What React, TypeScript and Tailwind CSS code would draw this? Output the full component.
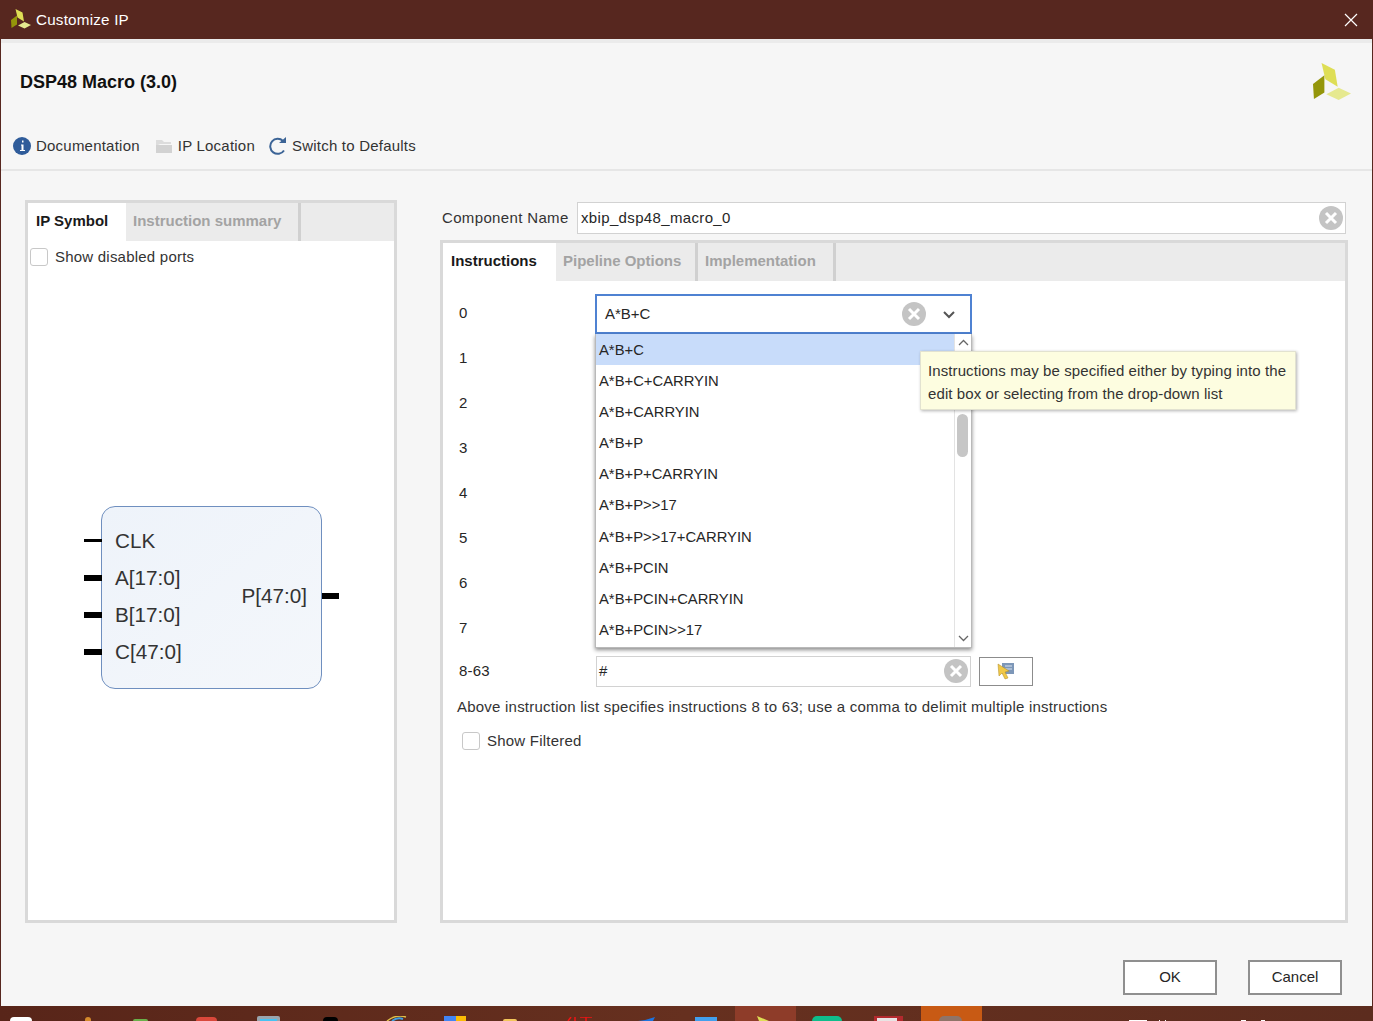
const options = [
  "A*B+C",
  "A*B+C+CARRYIN",
  "A*B+CARRYIN",
  "A*B+P",
  "A*B+P+CARRYIN",
  "A*B+P>>17",
  "A*B+P>>17+CARRYIN",
  "A*B+PCIN",
  "A*B+PCIN+CARRYIN",
  "A*B+PCIN>>17",
];

const ClearIcon = ({ size = 24 }: { size?: number }) => (
  <svg width={size} height={size} viewBox="0 0 24 24" className="shrink-0">
    <circle cx="12" cy="12" r="12" fill="#c4c4c4" />
    <path d="M7 7l10 10M17 7L7 17" stroke="#fff" strokeWidth="3" />
  </svg>
);

const Logo = ({ size }: { size: number }) => (
  <svg width={size} height={size} viewBox="0 0 40 40">
    <path d="M9 0l14 7 3 18L13 17z" fill="#dede55" />
    <path d="M0 22l12-9v18L1 38z" fill="#94960a" />
    <path d="M14 33l13-7 13 6-13 7z" fill="#e6e98f" />
  </svg>
);

const Checkbox = () => (
  <span className="w-[18px] h-[18px] bg-white border border-[#c8c8c8] rounded-[3px] shrink-0" />
);

const Port = ({ label, thick }: { label: string; thick?: boolean }) => (
  <div className="flex items-center h-[37px]">
    <span className={`w-[18px] bg-black -ml-[18px] ${thick ? "h-[6px]" : "h-[3px]"}`} />
    <span className="ml-[13px]">{label}</span>
  </div>
);

const Tab = ({ label, active, w }: { label: string; active?: boolean; w: string }) => (
  <div
    className={`h-full flex items-center font-bold text-[15px] tracking-normal pb-[2px] ${w} ${
      active ? "bg-white text-[#1a1a1a] pl-[8px]" : "pl-[7px] text-[#a3a3a3]"
    }`}
  >
    {label}
  </div>
);

export default function App() {
  return (
    <div className="w-[1373px] h-[1021px] flex flex-col bg-[#f6f6f6] text-[#262626] text-[15px] tracking-[0.22px] font-['Liberation_Sans',Arial,sans-serif] overflow-hidden">
      {/* Title bar */}
      <div className="h-[39px] bg-[#57271f] flex items-center justify-between pl-[11px] pr-[15px] text-white text-[15.2px] shrink-0">
        <div className="flex items-center gap-[5px]">
          <Logo size={20} />
          <span className="mt-[1px]">Customize IP</span>
        </div>
        <svg width="14" height="14" viewBox="0 0 14 14">
          <path d="M1 1l12 12M13 1L1 13" stroke="#fff" strokeWidth="1.2" />
        </svg>
      </div>

      <div className="flex-1 flex flex-col border-x border-[#57271f] min-h-0">
        {/* Header */}
        <div className="h-[132px] border-t-[4px] border-b-[2px] border-t-[#ebebeb] border-b-[#e6e6e6] pl-[12px] pr-[21px] flex flex-col shrink-0">
          <div className="flex justify-between items-start h-[58px]">
            <h1 className="font-bold text-[18px] tracking-normal text-[#111] ml-[7px] mt-[26px]">DSP48 Macro (3.0)</h1>
            <div className="mt-[20px]">
              <Logo size={38} />
            </div>
          </div>
          <div className="flex items-center mt-[34px] text-[#333]">
            <svg width="18" height="18" viewBox="0 0 18 18">
              <circle cx="9" cy="9" r="9" fill="#2f5c9a" />
              <path d="M9 3.500h1.500v2H9zM8 7.500h2.500V13H12v1H7v-1h1.500v-4.500H8z" fill="#fff" />
            </svg>
            <span className="ml-[5px]">Documentation</span>
            <svg width="18" height="16" viewBox="0 0 18 16" className="ml-[15px]">
              <path d="M1 2h6l2 2h7v2H5L1 8z" fill="#dcdcdc" />
              <path d="M1 7h16v8H1z" fill="#d2d2d2" />
            </svg>
            <span className="ml-[5px]">IP Location</span>
            <svg width="19" height="18" viewBox="0 0 19 18" className="ml-[14px]">
              <path d="M15 13.500A7.500 7.500 0 1 1 14 4" fill="none" stroke="#3c6496" strokeWidth="2" />
              <path d="M10 6h7V0z" fill="#3c6496" />
            </svg>
            <span className="ml-[4px]">Switch to Defaults</span>
          </div>
        </div>

        {/* Main */}
        <div className="flex-1 flex min-h-0 pl-[24px] pr-[24px] pt-[29px] gap-[43px]">
          {/* Left panel */}
          <div className="w-[372px] h-[723px] border-[3px] border-[#d9d9d9] bg-white flex flex-col shrink-0">
            <div className="h-[38px] bg-[#ebebeb] flex items-stretch shrink-0">
              <Tab label="IP Symbol" active w="w-[98px]" />
              <Tab label="Instruction summary" w="w-[175px] border-r-[3px] border-[#d0d0d0] mb-[5px]" />
            </div>
            <div className="flex items-center gap-[7px] mt-[5px] ml-[2px] text-[#333]">
              <Checkbox />
              <span>Show disabled ports</span>
            </div>
            {/* Symbol */}
            <div className="ml-[73px] mt-[237px] w-[221px] h-[183px] border border-[#6f8fbf] rounded-[14px] bg-gradient-to-br from-[#eef3fa] to-[#f4f7fb] flex items-center justify-between text-[20.7px] tracking-normal text-[#333] relative">
              <div className="flex flex-col mb-[2px]">
                <Port label="CLK" />
                <Port label="A[17:0]" thick />
                <Port label="B[17:0]" thick />
                <Port label="C[47:0]" thick />
              </div>
              <div className="flex items-center mb-[2px]">
                <span className="mr-[15px]">P[47:0]</span>
                <span className="w-[17px] h-[6px] bg-black -mr-[18px]" />
              </div>
            </div>
          </div>

          {/* Right side */}
          <div className="flex-1 flex flex-col min-w-0">
            <div className="flex items-center w-[904px] h-[32px] mt-[2px] ml-[2px] shrink-0">
              <span className="w-[135px] text-[#333] tracking-[0.35px]">Component Name</span>
              <div className="flex-1 h-full bg-white border border-[#d2d2d2] flex items-center justify-between pl-[3px] pr-[2px]">
                <span className="tracking-[0.35px]">xbip_dsp48_macro_0</span>
                <ClearIcon />
              </div>
            </div>
            <div className="w-[908px] h-[683px] mt-[6px] border-[3px] border-[#d9d9d9] bg-white flex flex-col relative">
              <div className="h-[38px] bg-[#ebebeb] flex items-stretch shrink-0">
                <Tab label="Instructions" active w="w-[113px]" />
                <Tab label="Pipeline Options" w="w-[142px] border-r-[3px] border-[#d0d0d0] mb-[5px]" />
                <Tab label="Implementation" w="w-[138px] border-r-[3px] border-[#d0d0d0] mb-[5px]" />
              </div>

              <div className="pl-[16px] pt-[10px] flex flex-col">
                {["0", "1", "2", "3", "4", "5", "6", "7"].map((n) => (
                  <div key={n} className="h-[45px] flex items-center">{n}</div>
                ))}
                <div className="flex items-center h-[32px] mt-[4px]">
                  <span className="w-[137px]">8-63</span>
                  <div className="w-[375px] h-[31px] border border-[#d2d2d2] flex items-center justify-between pl-[2px] pr-[2px]">
                    <span>#</span>
                    <ClearIcon />
                  </div>
                  <div className="w-[54px] h-[29px] ml-[8px] border border-[#8c8c8c] flex items-center justify-center">
                    <svg width="18" height="18" viewBox="0 0 18 18">
                      <path d="M5 1h12v11H5z" fill="#7d97b8" />
                      <path d="M8 4h7M8 7h7" stroke="#dbe4ef" strokeWidth="1" />
                      <path d="M1 2l11 7-4 1 3 6-3 1-3-6-3 3z" fill="#f0c848" stroke="#b08a20" strokeWidth="0.5" />
                    </svg>
                  </div>
                </div>
                <p className="mt-[9px] -ml-[2px] text-[#333]">
                  Above instruction list specifies instructions 8 to 63; use a comma to delimit multiple instructions
                </p>
                <div className="flex items-center gap-[7px] mt-[11px] ml-[3px] text-[#333]">
                  <Checkbox />
                  <span>Show Filtered</span>
                </div>
              </div>

              {/* Open combo box */}
              <div className="absolute left-[152px] top-[51px] w-[377px] z-10 tracking-normal">
                <div className="h-[40px] bg-white border-[2px] border-[#4f82d2] flex items-center pl-[8px] pr-[14px]">
                  <span className="flex-1">A*B+C</span>
                  <ClearIcon />
                  <svg width="14" height="9" viewBox="0 0 14 9" className="ml-[16px]">
                    <path d="M2 2l5 5 5-5" fill="none" stroke="#555" strokeWidth="2" />
                  </svg>
                </div>
                <div className="h-[314px] flex bg-white border-x border-b border-[#b9b9b9] shadow-[0_2px_4px_rgba(0,0,0,0.45)]">
                  <ul className="flex-1 min-w-0 text-[14.8px]">
                    {options.map((o, i) => (
                      <li
                        key={o}
                        className={`h-[31.2px] flex items-center pl-[3px] ${i === 0 ? "bg-[#c8dcfa]" : ""}`}
                      >
                        {o}
                      </li>
                    ))}
                  </ul>
                  <div className="w-[17px] border-l border-[#e3e3e3] flex flex-col items-center justify-between py-[5px] relative">
                    <svg width="11" height="7" viewBox="0 0 11 7">
                      <path d="M1 6l4.500-4.500L10 6" fill="none" stroke="#666" strokeWidth="1.3" />
                    </svg>
                    <span className="absolute top-[80px] left-[2px] w-[11px] h-[43px] rounded-full bg-[#c6c6c6]" />
                    <svg width="11" height="7" viewBox="0 0 11 7">
                      <path d="M1 1l4.500 4.500L10 1" fill="none" stroke="#666" strokeWidth="1.3" />
                    </svg>
                  </div>
                </div>
              </div>

              {/* Tooltip */}
              <div className="absolute left-[477px] top-[108px] w-[376px] h-[59px] z-20 bg-[#fdfde0] border border-[#e2e2d0] shadow-[1px_1px_3px_rgba(0,0,0,0.3)] pl-[7px] pt-[8px] leading-[22.5px] tracking-[0.1px] text-[#333]">
                Instructions may be specified either by typing into the edit box or selecting from the drop-down list
              </div>
            </div>
          </div>
        </div>

        {/* Footer */}
        <div className="flex justify-end gap-[31px] pr-[30px] pb-[11px] shrink-0 tracking-normal">
          <button className="w-[94px] h-[35px] bg-white border-2 border-[#8f8f8f]">OK</button>
          <button className="w-[94px] h-[35px] bg-white border-2 border-[#8f8f8f]">Cancel</button>
        </div>
      </div>

      {/* Taskbar, cut off at the bottom of the screen */}
      <div className="h-[15px] shrink-0 flex items-end overflow-hidden bg-gradient-to-r from-[#582519] via-[#66301f] to-[#5c2c1e]">
        <span className="ml-[10px] w-[22px] h-[4px] rounded-t-full bg-white" />
        <span className="ml-[53px] w-[6px] h-[4px] rounded-t-full bg-[#d58a2b]" />
        <span className="ml-[42px] w-[15px] h-[2px] rounded-t-full bg-[#6ab04a]" />
        <span className="ml-[48px] w-[21px] h-[4px] rounded-t-full bg-[#d9483b]" />
        <span className="ml-[40px] w-[23px] h-[5px] rounded-t-[2px] bg-[#9aa5ad] px-[3px] pt-[3px]">
          <span className="block h-[2px] bg-[#47c2f2]" />
        </span>
        <span className="ml-[43px] w-[15px] h-[4px] rounded-t-full bg-black" />
        <svg width="21" height="5" viewBox="0 0 21 5" className="ml-[48px]">
          <path d="M1 5Q10-2 20 1" fill="none" stroke="#e0c24a" strokeWidth="1.5" />
          <path d="M6 5Q11 1 17 3" fill="none" stroke="#3f9fe0" strokeWidth="2" />
        </svg>
        <span className="ml-[37px] w-[12px] h-[5px] bg-[#4285f4]" />
        <span className="w-[10px] h-[5px] bg-[#fbbc05]" />
        <span className="ml-[37px] w-[14px] h-[2px] rounded-t-[2px] bg-[#f3c65b]" />
        <svg width="26" height="4" viewBox="0 0 26 4" className="ml-[50px]">
          <path d="M1 4l3-4M8 0v4M13 0h12M19 0v4" stroke="#f01414" strokeWidth="1.5" />
        </svg>
        <svg width="17" height="4" viewBox="0 0 17 4" className="ml-[45px]">
          <path d="M0 4Q9 3 17 0L15 4z" fill="#1d74e0" />
        </svg>
        <span className="ml-[40px] w-[22px] h-[4px] bg-[#42a0ee]" />
        <span className="ml-[18px] w-[61px] h-full bg-[#8e3c29] flex items-end pl-[22px]">
          <svg width="13" height="5" viewBox="0 0 13 5">
            <path d="M0 0l12 5H2z" fill="#dede55" />
          </svg>
        </span>
        <span className="ml-[16px] w-[30px] h-[5px] rounded-t-[6px] bg-[#0fbd8c]" />
        <span className="ml-[32px] w-[29px] h-[5px] bg-[#b32a2e] pl-[3px] pt-[2px]">
          <span className="block h-[3px] w-[20px] bg-[#e8e4e4]" />
        </span>
        <span className="ml-[18px] w-[61px] h-full bg-[#c85a14] flex items-end pl-[18px]">
          <span className="w-[23px] h-[5px] rounded-t-[12px] bg-[#8f7468]" />
        </span>
        <span className="ml-[147px] w-[18px] h-[1px] bg-white" />
        <span className="ml-[12px] w-[1px] h-[1px] bg-white" />
        <span className="ml-[5px] w-[1px] h-[1px] bg-white" />
        <span className="ml-[75px] w-[5px] h-[1px] bg-white" />
        <span className="ml-[15px] w-[4px] h-[1px] bg-white" />
      </div>
    </div>
  );
}
